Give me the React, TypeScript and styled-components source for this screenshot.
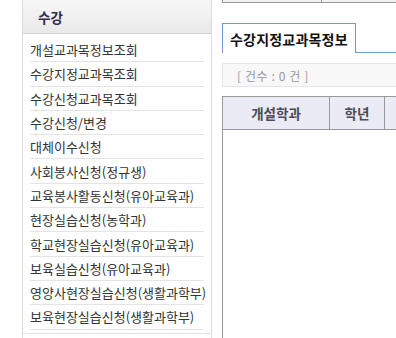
import React from "react";
import styled, { createGlobalStyle } from "styled-components";

const menus = [
  "개설교과목정보조회",
  "수강지정교과목조회",
  "수강신청교과목조회",
  "수강신청/변경",
  "대체이수신청",
  "사회봉사신청(정규생)",
  "교육봉사활동신청(유아교육과)",
  "현장실습신청(농학과)",
  "학교현장실습신청(유아교육과)",
  "보육실습신청(유아교육과)",
  "영양사현장실습신청(생활과학부)",
  "보육현장실습신청(생활과학부)",
];

const App = () => {
  return (
    <>
      <GlobalStyle />
      <Page>
        <Side>
          <SideHeader>수강</SideHeader>
          <MenuList>
            {menus.map((m) => (
              <MenuItem key={m}>{m}</MenuItem>
            ))}
          </MenuList>
        </Side>
        <Main>
          <TopStrip>
            <TopCell $w={99} />
            <TopCell $w={200} />
          </TopStrip>
          <TabBar>
            <Tab>수강지정교과목정보</Tab>
            <TabRest />
          </TabBar>
          <CountBox>[ 건수 : 0 건 ]</CountBox>
          <Table>
            <HeadRow>
              <HeadCell $w={106}>개설학과</HeadCell>
              <HeadCell $w={54}>학년</HeadCell>
              <HeadCell $w={120} />
            </HeadRow>
            <TableBody />
          </Table>
        </Main>
      </Page>
    </>
  );
};

export default App;

const GlobalStyle = createGlobalStyle`
  html, body {
    margin: 0;
    padding: 0;
    background: #fff;
    overflow: hidden;
  }
  body {
    font-family: "Noto Sans CJK KR", "Liberation Sans", sans-serif;
  }
`;

const Page = styled.div`
  display: flex;
  height: 338px;
  width: 396px;
  overflow: hidden;
`;

const Side = styled.div`
  margin-left: 22px;
  width: 188px;
  flex-shrink: 0;
  border-left: 1px solid #dcdcdc;
  border-right: 1px solid #dcdcdc;
  display: flex;
  flex-direction: column;
`;

const SideHeader = styled.div`
  height: 33px;
  border-bottom: 1px solid #d4d4d4;
  background: linear-gradient(#f7f7f7, #e9e9e9);
  padding-left: 15px;
  display: flex;
  align-items: center;
  font-size: 13.5px;
  font-weight: bold;
  color: #2d2d50;
`;

const MenuList = styled.div`
  padding: 4px 7px 0 7px;
  height: 295px;
  border-bottom: 1px solid #e2e2e2;
`;

const MenuItem = styled.div`
  height: 23.3px;
  border-bottom: 1px solid #e4e4e4;
  display: flex;
  align-items: center;
  font-size: 13px;
  color: #333;
  white-space: nowrap;
`;

const Main = styled.div`
  margin-left: 10px;
  width: 300px;
  flex-shrink: 0;
  display: flex;
  flex-direction: column;
`;

const TopStrip = styled.div`
  display: flex;
  height: 2px;
  border-left: 1px solid #999;
  border-bottom: 1px solid #999;
  background: #f2f2f2;
`;

const TopCell = styled.div<{ $w: number }>`
  width: ${(p) => p.$w}px;
  border-right: 1px solid #999;
`;

const TabBar = styled.div`
  display: flex;
  margin-top: 20px;
  height: 30px;
`;

const Tab = styled.div`
  border: 1px solid #6f98cc;
  border-bottom: none;
  padding: 0 7px;
  display: flex;
  align-items: center;
  font-size: 14px;
  font-weight: bold;
  color: #111;
  letter-spacing: 0.2px;
`;

const TabRest = styled.div`
  flex: 1;
  border-bottom: 1px solid #6f98cc;
`;

const CountBox = styled.div`
  margin-top: 10px;
  height: 22px;
  border: 1px solid #e6e6e6;
  background: #f8f8f8;
  padding-left: 14px;
  display: flex;
  align-items: center;
  font-size: 12px;
  color: #999;
  white-space: pre;
  letter-spacing: 0.6px;
`;

const Table = styled.div`
  margin-top: 9px;
  flex: 1;
  display: flex;
  flex-direction: column;
  border-left: 1px solid #999;
`;

const HeadRow = styled.div`
  display: flex;
  height: 32px;
  border-top: 1px solid #999;
  border-bottom: 1px solid #999;
  background: #eaebf4;
`;

const HeadCell = styled.div<{ $w: number }>`
  width: ${(p) => p.$w}px;
  flex-shrink: 0;
  border-right: 1px solid #999;
  display: flex;
  align-items: center;
  justify-content: center;
  font-size: 13.5px;
  font-weight: bold;
  color: #4a4a5a;
`;

const TableBody = styled.div`
  flex: 1;
  background: #fff;
`;
